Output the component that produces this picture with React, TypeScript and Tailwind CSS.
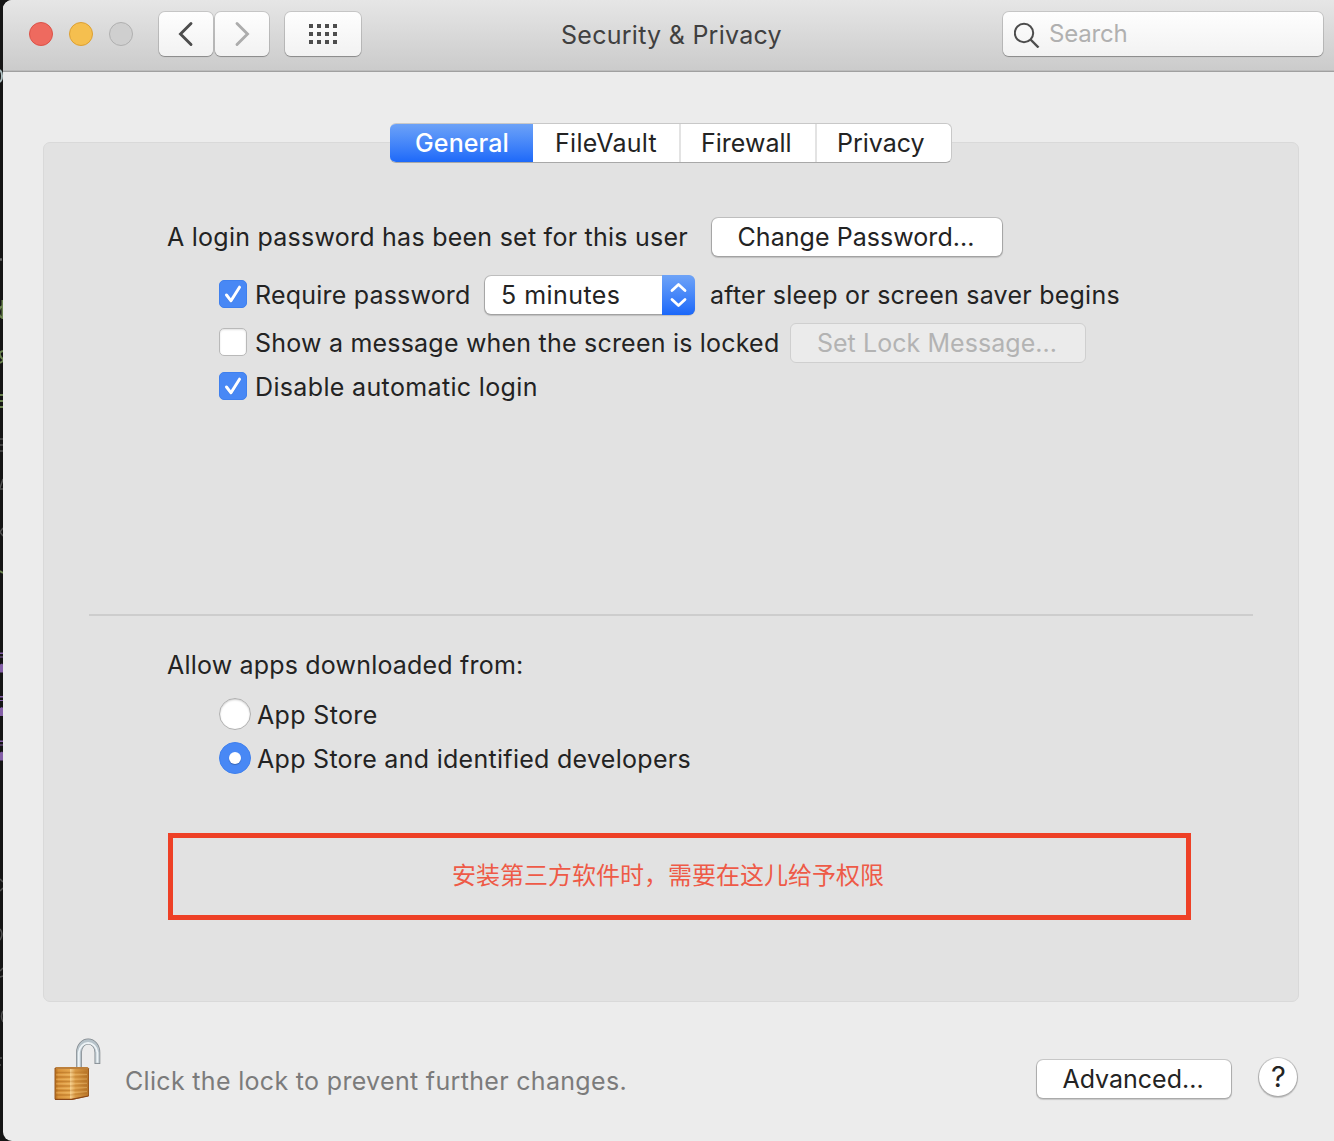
import type { ReactNode } from 'react'

function T({ className = '', children }: { className?: string; children: ReactNode }) {
  return <span className={`block shrink-0 whitespace-nowrap ${className}`}>{children}</span>
}

function Check({ className = '' }: { className?: string }) {
  return (
    <span className={`flex size-7 shrink-0 items-center justify-center rounded-[5px] border border-[#3f80ee] bg-[#4888f5] ${className}`}>
      <svg width="28" height="28" viewBox="0 0 28 28" fill="none" className="shrink-0">
        <path d="M7.5 15.5 12 21.500 20.5 7.5" stroke="#2f68c8" strokeOpacity=".45" strokeWidth="3" strokeLinecap="round" strokeLinejoin="round" />
        <path d="M7.5 15 12 20.800 20.5 7.200" stroke="#fff" strokeWidth="3" strokeLinecap="round" strokeLinejoin="round" />
      </svg>
    </span>
  )
}

// Sliver of the editor window that shows behind the left edge.
function Strip() {
  return (
    <svg width="14" height="1141" viewBox="0 0 14 1141" className="block shrink-0" fill="none">
      <rect width="14" height="1141" fill="#151515" />
      <ellipse cx="-1" cy="76" rx="3" ry="6" stroke="#aebfc1" strokeWidth="2" />
      <path d="M0 259.500h2" stroke="#666" strokeWidth="2.500" />
      <path d="M2.500 300v19M3 306q-4 1-4 6t4 6M3 351q-4 1-3 4t3 4t-3 4M0 395h3M0 401h3M0 407h3" stroke="#6b8350" strokeWidth="2" />
      <path d="M0 439h3M0 445h3M0 451h3M0 488l3-9M0 489h3M3 528l-3 4 3 4" stroke="#505050" strokeWidth="1.500" />
      <path d="M0 571l3 2" stroke="#6b8350" strokeWidth="2" />
      {[652.5, 696, 740.5].map((y) => (
        <g key={y} fill="#8560a8">
          <rect y={y} width="3" height="1.500" />
          <rect y={y + 4} width="3" height="1" />
          <path d={`M0 ${y + 12}l2-1 1 1v8H0z`} />
        </g>
      ))}
      <path d="M0 879l3 3M0 891l3-3M0 929q4 5 0 11M0 971l3-3M0 977l3-1M3 1011q-3 5 0 11M0 1058h2M0 1065h1" stroke="#505050" strokeWidth="1.500" />
    </svg>
  )
}

const btn = 'flex shrink-0 items-center rounded-[6px] bg-white shadow-[0_0_0_1px_rgba(0,0,0,0.14),0_1px_1px_1px_rgba(0,0,0,0.16)]'
const barBtn = 'flex h-11 items-center rounded-[6px] bg-linear-to-b from-[#fefefe] to-[#f2f2f2] shadow-[0_0_0_1px_rgba(0,0,0,0.12),0_1px_1px_rgba(0,0,0,0.25)]'

function Lock() {
  return (
    <svg width="50" height="64" viewBox="0 0 50 64" className="shrink-0">
      <defs>
        <linearGradient id="left" x1="0" x2="1" y1="0" y2="0">
          <stop offset="0" stopColor="#b9711f" />
          <stop offset=".2" stopColor="#d8923a" />
          <stop offset="1" stopColor="#e6a84f" />
        </linearGradient>
        <linearGradient id="right" x1="0" x2="1" y1="0" y2="0">
          <stop offset="0" stopColor="#f6d293" />
          <stop offset=".3" stopColor="#d99a45" />
          <stop offset="1" stopColor="#b9772b" />
        </linearGradient>
      </defs>
      <path d="M26 30V14.500a9.200 11 0 0 1 18.400 0v11.500" fill="none" stroke="#80878c" strokeWidth="5.800" />
      <path d="M26 30V14.500a9.200 11 0 0 1 18.400 0v10.700" fill="none" stroke="#b7c3ca" strokeWidth="4.400" />
      <path d="M25.800 30V14.500a9.400 11.200 0 0 1 18.600 0v10.300" fill="none" stroke="#edf3f6" strokeWidth="2" />
      <path d="M1.500 30.500 3 29h31.500l1.500 1.500v27.500L19 62H2.500l-1-1z" fill="#9a5a20" />
      <path d="M2.500 31H17v30H2.500z" fill="url(#left)" />
      <path d="M17 31h18v27L19 61h-2z" fill="url(#right)" />
      <path d="M3 34.500h14M3 39h14M3 43.500h14M3 48h14M3 52.500h14M3 57h14" fill="none" stroke="#a96319" strokeOpacity=".45" strokeWidth="1.300" />
      <path d="M17 34.500l17-.3M17 39l17-.3M17 43.500l17-.5M17 48l17-.8M17 52.500l17-1.200M17 57l17-2" fill="none" stroke="#a96319" strokeOpacity=".25" strokeWidth="1.300" />
      <path d="M3 36.800h14l17-.3M3 41.300h14l17-.3M3 45.800h14l17-.5M3 50.300h14l17-.8M3 54.800h14l17-1.200" fill="none" stroke="#ffd78c" strokeOpacity=".35" strokeWidth="1" />
      <path d="M3 30h32" stroke="#dfa656" strokeWidth="1" />
      <path d="M2 61.300h16.500L35.500 58" stroke="#8a4717" strokeWidth="1.200" fill="none" />
    </svg>
  )
}

export default function App() {
  return (
    <div className="flex h-[1141px] w-[1334px] overflow-hidden bg-[#151515] font-['Inter',sans-serif] text-[25px] leading-[30px] text-[#232323]">
      <Strip />
      <div className="-ml-[11px] flex w-[1331px] shrink-0 flex-col overflow-hidden rounded-l-[9px] bg-[#ececec]">
        <header className="flex h-[72px] shrink-0 items-start border-b border-[#a0a0a0] bg-linear-to-b from-[#e6e6e6] to-[#cbcbcb] pt-3 pr-[11px] pl-[26px] shadow-[inset_0_-1px_0_#bcbcbc]">
          <div className="mt-[10px] flex gap-4">
            <span className="size-6 rounded-full border border-[#dc5248] bg-[#ee6a5f]" />
            <span className="size-6 rounded-full border border-[#dda033] bg-[#f5bf4f]" />
            <span className="size-6 rounded-full border border-[#b0b0b0] bg-[#cfcfcf]" />
          </div>
          <div className="ml-[26px] flex gap-[2px]">
            <span className={`${barBtn} w-[54px]`}>
              <svg width="54" height="44" fill="none"><path d="M32 11.500 21.500 22 32 32.500" stroke="#4d4d4d" strokeWidth="2.900" strokeLinecap="round" /></svg>
            </span>
            <span className={`${barBtn} w-[54px]`}>
              <svg width="54" height="44" fill="none"><path d="M22 11.500 32.500 22 22 32.500" stroke="#acacac" strokeWidth="2.900" strokeLinecap="round" /></svg>
            </span>
          </div>
          <span className={`${barBtn} ml-4 w-[76px] justify-center`}>
            <svg width="28" height="20" fill="#4d4d4d">
              {[0, 8, 16].map((y) => [0, 8, 16, 24].map((x) => <rect key={`${x}-${y}`} x={x} y={y} width="4" height="4" />))}
            </svg>
          </span>
          <T className="mt-2 ml-[200px] w-[220px] tracking-[0.27px] text-[#404040]">Security &amp; Privacy</T>
          <div className={`${barBtn} ml-auto w-[320px] pl-[11px] text-[#b0b0b0]`}>
            <svg width="26" height="26" fill="none" stroke="#4d4d4d" strokeWidth="2" className="mt-px"><circle cx="10" cy="11" r="9.200" /><path d="m16.500 17.500 8 8" strokeWidth="2.400" /></svg>
            <T className="ml-[9px] text-[24px] tracking-[-0.18px]">Search</T>
          </div>
        </header>

        <main className="mt-[70px] mr-[35px] ml-10 flex h-[860px] shrink-0 flex-col rounded-[7px] border border-[#d9d9d9] bg-[#e2e2e2]">
          <nav className="-mt-5 flex h-10 w-[562px] shrink-0 self-center overflow-hidden rounded-[6px] border border-t-[#c8c8c8] border-r-[#c8c8c8] border-b-[#a8a8a8] border-l-0 bg-white">
            <span className="-my-px flex w-[143px] justify-center bg-linear-to-b from-[#6ea3f7] to-[#1a67f9] pt-[5px] pl-px font-medium text-white"><T className="tracking-[0.1px]">General</T></span>
            <span className="flex w-[146px] justify-center pt-1"><T className="tracking-[0.25px]">FileVault</T></span>
            <span className="flex w-[136px] justify-center border-l-2 border-[#e3e3e3] pt-1 pr-[2px]"><T className="w-[92px]">Firewall</T></span>
            <span className="flex w-[136px] justify-center border-l-2 border-[#e3e3e3] pt-1 pr-[6px]"><T className="w-[88px]">Privacy</T></span>
          </nav>

          <section className="mt-[54px] flex flex-col pl-[123px]">
            <div className="flex h-10 items-center">
              <T className="w-[521px] tracking-[0.25px]">A login password has been set for this user</T>
              <span className={`${btn} ml-6 h-[38px] w-[290px] justify-center pr-[2px]`}><T className="tracking-[0.05px]">Change Password...</T></span>
            </div>
            <div className="mt-[18px] ml-[52px] flex h-10 items-center">
              <Check className="mb-[2px]" />
              <T className="ml-2 w-[216px] tracking-[0.2px]">Require password</T>
              <span className={`${btn} ml-[14px] h-[38px] w-[209px] justify-between pl-4`}>
                <T className="tracking-[0.45px]">5 minutes</T>
                <span className="-my-px -mr-px flex h-10 w-[33px] items-center justify-center rounded-r-[6px] bg-linear-to-b from-[#6ea3f7] to-[#1a67f9]">
                  <svg width="33" height="40" fill="none" stroke="#fff" strokeWidth="2.800" strokeLinecap="round" strokeLinejoin="round"><path d="m10 15.500 6.500-6L23 15.500M10 24.500l6.500 6 6.500-6" /></svg>
                </span>
              </span>
              <T className="ml-4 tracking-[0.24px]">after sleep or screen saver begins</T>
            </div>
            <div className="mt-2 ml-[52px] flex h-10 items-center">
              <span className="mb-[2px] size-7 shrink-0 rounded-[5px] border border-[#b9b9b9] bg-white shadow-[inset_0_1px_2px_rgba(0,0,0,0.12)]" />
              <T className="ml-2 w-[524px] tracking-[0.21px]">Show a message when the screen is locked</T>
              <span className="ml-[11px] flex h-10 w-[296px] items-center justify-center rounded-[6px] border border-[#cfcfcf] bg-[#ebebeb] pr-[2px] text-[#b3b3b3]"><T className="tracking-[0.06px]">Set Lock Message...</T></span>
            </div>
            <div className="mt-[9px] ml-[52px] flex h-7 items-center">
              <Check />
              <T className="mt-[2px] ml-2 tracking-[0.35px]">Disable automatic login</T>
            </div>
          </section>

          <hr className="mx-[45px] mt-[214px] border-t-2 border-[#cdcdcd]" />

          <section className="mt-[34px] flex flex-col pl-[123px]">
            <T className="tracking-[0.19px]">Allow apps downloaded from:</T>
            <div className="mt-[18px] ml-[52px] flex h-8 items-center">
              <span className="size-8 rounded-full border border-[#b0b0b0] bg-white shadow-[inset_0_1px_2px_rgba(0,0,0,0.2)]" />
              <T className="mt-[2px] ml-[6px] tracking-[0.35px]">App Store</T>
            </div>
            <div className="mt-3 ml-[52px] flex h-8 items-center">
              <span className="flex size-8 items-center justify-center rounded-full border border-[#3f80ee] bg-[#4888f5]">
                <span className="size-[12px] rounded-full bg-white shadow-[0_1px_1px_rgba(0,0,0,0.25)]" />
              </span>
              <T className="mt-[2px] ml-[6px] tracking-[0.29px]">App Store and identified developers</T>
            </div>
          </section>

          <div className="mt-[59px] ml-[124px] flex h-[87px] w-[1023px] shrink-0 items-center border-[5px] border-[#ee4026] pb-[5px] pl-[279px] font-['Noto_Sans_CJK_SC',sans-serif] text-[24px] text-[#ee5a47]">
            安装第三方软件时，需要在这儿给予权限
          </div>
        </main>

        <footer className="flex h-[139px] shrink-0 pr-[37px] pl-[50px]">
          <div className="mt-9"><Lock /></div>
          <T className="mt-[64px] ml-[22px] tracking-[0.32px] text-[#7b7b7b]">Click the lock to prevent further changes.</T>
          <span className={`${btn} mt-[58px] ml-auto h-[38px] w-[194px] justify-center pr-[2px]`}><T>Advanced...</T></span>
          <span className="mt-[56px] ml-[28px] flex size-[38px] items-center justify-center rounded-full bg-white pl-px text-[29px] shadow-[0_0_0_1px_rgba(0,0,0,0.12),0_1px_1px_1px_rgba(0,0,0,0.18)]">?</span>
        </footer>
      </div>
    </div>
  )
}
